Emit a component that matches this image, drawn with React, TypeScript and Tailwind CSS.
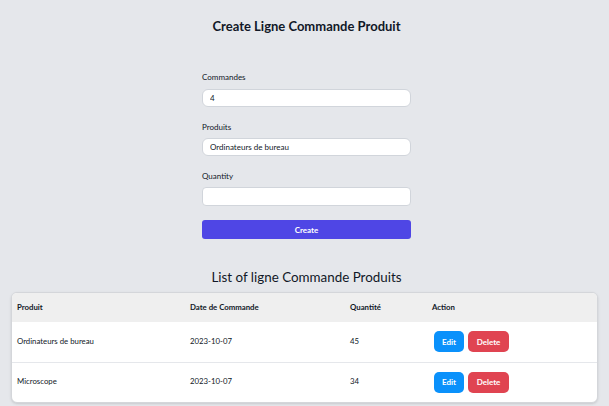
import React from "react";

const rows = [
  { produit: "Ordinateurs de bureau", date: "2023-10-07", qte: "45" },
  { produit: "Microscope", date: "2023-10-07", qte: "34" },
];

export default function App() {
  return (
    <div className="min-h-[406px] bg-[#e5e7eb] font-['Lato',sans-serif] text-[#111827]">
      <div className="pl-[4px]">
        <h1 className="pt-[18px] text-center text-[13px] font-bold leading-[16px]">
          Create Ligne Commande Produit
        </h1>
        <form className="mx-auto mt-[37px] w-[209px]" onSubmit={(e) => e.preventDefault()}>
          <label className="block text-[8px] leading-[12px]">Commandes</label>
          <input
            defaultValue="4"
            className="mt-[6px] block h-[18px] w-full rounded-[6px] border border-[#d1d5db] bg-white px-[7px] text-[8px] outline-none"
          />
          <label className="mt-[14px] block text-[8px] leading-[12px]">Produits</label>
          <input
            defaultValue="Ordinateurs de bureau"
            className="mt-[5px] block h-[18px] w-full rounded-[6px] border border-[#d1d5db] bg-white px-[7px] text-[8px] outline-none"
          />
          <label className="mt-[14px] block text-[8px] leading-[12px]">Quantity</label>
          <input className="mt-[5px] block h-[19px] w-full rounded-[4px] border border-[#d1d5db] bg-white px-[7px] text-[8px] outline-none" />
          <button
            type="submit"
            className="mt-[14px] block h-[19px] w-full rounded-[3px] bg-[#4f46e5] text-[8px] font-bold text-white"
          >
            Create
          </button>
        </form>
        <h2 className="mt-[28px] text-center text-[13.4px] leading-[20px]">
          List of ligne Commande Produits
        </h2>
      </div>
      <div className="mx-[11px] mt-[5px] overflow-hidden rounded-[6px] border border-[#d4d6da] bg-white shadow-sm">
        <table className="w-full table-fixed border-collapse text-left text-[7.8px]">
          <colgroup>
            <col className="w-[173px]" />
            <col className="w-[160px]" />
            <col className="w-[82px]" />
            <col />
          </colgroup>
          <thead>
            <tr className="h-[29px] bg-[#efefef]">
              <th className="px-[5px] font-bold">Produit</th>
              <th className="px-[5px] font-bold">Date de Commande</th>
              <th className="px-[5px] font-bold">Quantité</th>
              <th className="px-[5px] font-bold">Action</th>
            </tr>
          </thead>
          <tbody>
            {rows.map((r, i) => (
              <tr key={i} className={`h-[40px] ${i > 0 ? "border-t border-[#e5e7eb]" : ""}`}>
                <td className="px-[5px]">{r.produit}</td>
                <td className="px-[5px]">{r.date}</td>
                <td className="px-[5px]">{r.qte}</td>
                <td className="px-[5px]">
                  <div className="flex gap-[4px] pl-[2px]">
                    <button className="h-[21px] w-[30px] rounded-[5px] bg-[#0a91fb] text-[8px] font-bold text-white">
                      Edit
                    </button>
                    <button className="h-[21px] w-[41px] rounded-[5px] bg-[#e04451] text-[8px] font-bold text-white">
                      Delete
                    </button>
                  </div>
                </td>
              </tr>
            ))}
          </tbody>
        </table>
      </div>
    </div>
  );
}
